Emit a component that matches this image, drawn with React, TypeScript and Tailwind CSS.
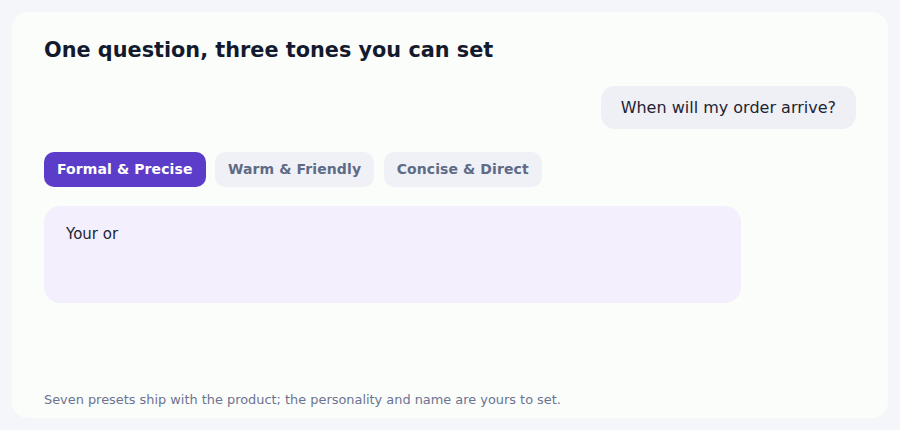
export default function App() {
  const tones = ["Formal & Precise", "Warm & Friendly", "Concise & Direct"]
  const active = 0

  return (
    <div className="h-[430px] w-full bg-[#f5f6fa] p-3 font-['DejaVu_Sans',sans-serif]">
      <div className="flex h-[406px] flex-col rounded-2xl bg-[#fbfdfb] px-8 pt-6 pb-2">
        <h1 className="text-[20.8px] font-bold leading-[28px] text-[#141a2e]">
          One question, three tones you can set
        </h1>

        {/* User question */}
        <div className="mt-[22px] flex justify-end">
          <div className="rounded-[14px] bg-[#eef0f6] px-5 py-[10px] text-[16px] leading-[23px] text-[#1f2433]">
            When will my order arrive?
          </div>
        </div>

        {/* Tone tabs */}
        <div className="mt-[23px] flex gap-[9.5px]">
          {tones.map((t, i) => (
            <button
              key={t}
              className={
                i === active
                  ? "flex h-[35px] items-center rounded-[10px] bg-[#5b3dc9] px-[13px] text-[14px] font-bold tracking-[0.1px] text-white"
                  : "flex h-[35px] items-center rounded-[10px] bg-[#f0f1f7] px-[13px] text-[14px] font-bold tracking-[0.1px] text-[#5f6b85]"
              }
            >
              {t}
            </button>
          ))}
        </div>

        {/* Streaming answer */}
        <div className="mt-[19px] h-[97px] w-[697px] rounded-2xl bg-[#f3effc] px-[22px] pt-4 text-[15px] leading-[24px] text-[#1f2433]">
          Your or
        </div>

        <p className="mt-auto text-[12.9px] leading-[20px] text-[#6b7390]">
          Seven presets ship with the product; the personality and name are yours to set.
        </p>
      </div>
    </div>
  )
}
